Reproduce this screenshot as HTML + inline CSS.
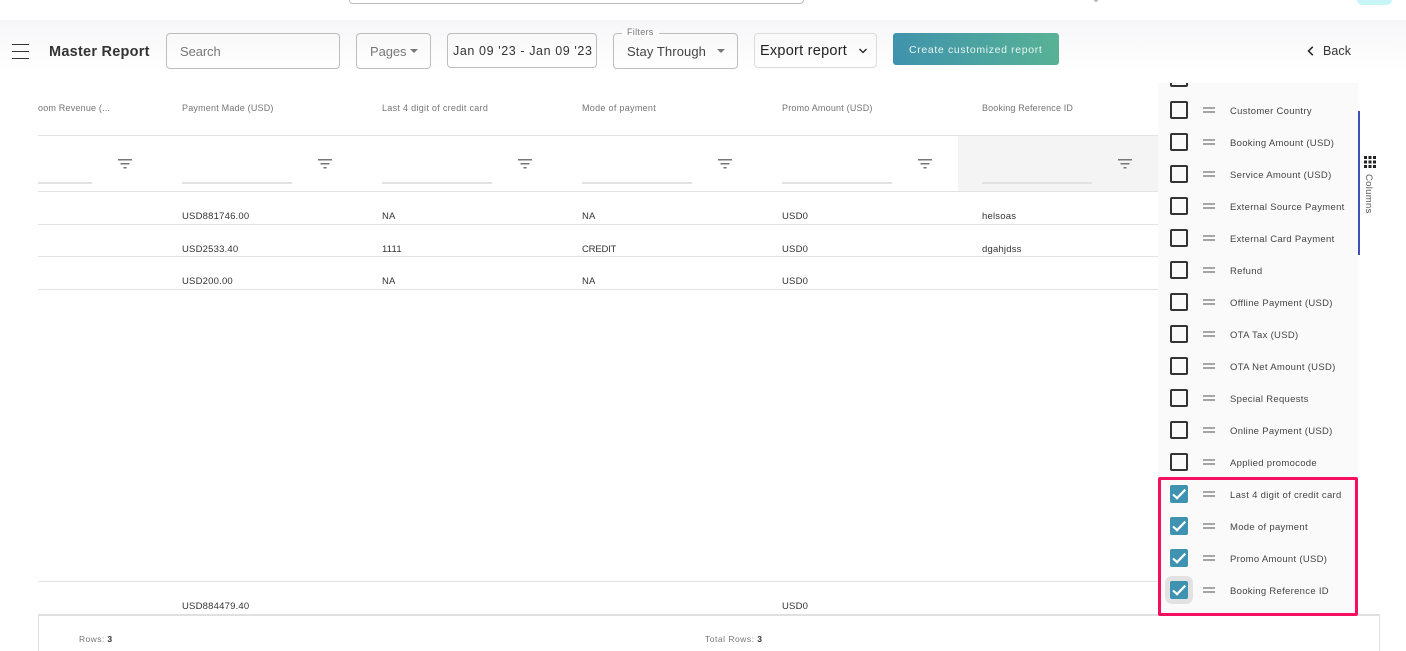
<!DOCTYPE html>
<html>
<head>
<meta charset="utf-8">
<style>
html,body{margin:0;padding:0;background:#fff;width:1406px;height:651px;overflow:hidden;}
body{font-family:"Liberation Sans",sans-serif;}
#p{position:relative;width:1406px;height:651px;overflow:hidden;}
.a{position:absolute;box-sizing:border-box;}
.t{position:absolute;white-space:nowrap;line-height:14px;}
.box{position:absolute;box-sizing:border-box;border:1px solid #bdbdbd;border-radius:4px;background:transparent;}
.h{font-size:9px;color:#757575;top:101px;letter-spacing:.2px;}
.c{font-size:9.5px;color:#333;letter-spacing:.2px;}
.l{position:absolute;left:38px;height:1px;background:#e2e2e2;}
.u{position:absolute;top:182px;height:2px;background:#e2e2e2;}
.f{position:absolute;top:159px;width:14px;height:10px;}
.cb{position:absolute;left:1170px;width:18px;height:18px;box-sizing:border-box;border:2px solid #333;border-radius:2px;background:#fafafa;}
.cb.on{background:#3f93b0;border:0;}
.cb svg{position:absolute;left:0;top:0;}
.d{position:absolute;left:1203px;width:12px;height:6px;box-sizing:border-box;border-top:2px solid #a6a6a6;border-bottom:2px solid #a6a6a6;}
.n{position:absolute;left:1230px;font-size:9.5px;color:#444;white-space:nowrap;line-height:14px;letter-spacing:.3px;}
</style>
</head>
<body>
<div id="p">
<!-- top bar remnants -->
<div class="a" style="left:349px;top:-10px;width:455px;height:14px;border:1px solid #bdbdbd;border-radius:4px;"></div>
<div class="a" style="left:1357px;top:-10px;width:35px;height:15px;background:#c8f5f5;border-radius:5px;"></div>
<div class="a" style="left:1094px;top:0;width:4px;height:2px;background:#bbb;border-radius:0 0 2px 2px;"></div>

<!-- header gradient -->
<div class="a" style="left:0;top:20px;width:1406px;height:52px;background:linear-gradient(#f6f6f8,#fff);"></div>

<!-- hamburger -->
<div class="a" style="left:12px;top:44px;width:17px;height:1.4px;background:#333;"></div>
<div class="a" style="left:12px;top:51px;width:17px;height:1.4px;background:#333;"></div>
<div class="a" style="left:12px;top:58px;width:17px;height:1.4px;background:#333;"></div>

<div class="t" style="left:49px;top:44.500px;font-size:14.500px;font-weight:bold;color:#333;letter-spacing:.25px;">Master Report</div>

<div class="box" style="left:166px;top:33px;width:174px;height:36px;"></div>
<div class="t" style="left:180px;top:45px;font-size:13px;color:#777;letter-spacing:-.1px;">Search</div>

<div class="box" style="left:356px;top:33px;width:75px;height:36px;"></div>
<div class="t" style="left:370px;top:45px;font-size:13px;color:#777;letter-spacing:-.1px;">Pages</div>
<div class="a" style="left:410px;top:49px;border-left:4.500px solid transparent;border-right:4.500px solid transparent;border-top:4.500px solid #777;"></div>

<div class="box" style="left:447px;top:33px;width:150px;height:35px;"></div>
<div class="t" style="left:453px;top:44px;font-size:12.500px;color:#333;letter-spacing:.6px;">Jan 09 '23 - Jan 09 '23</div>

<div class="box" style="left:613px;top:33px;width:125px;height:36px;"></div>
<div class="a" style="left:622px;top:30px;width:37px;height:6px;background:#fbfbfc;"></div>
<div class="t" style="left:627px;top:25px;font-size:9px;color:#777;letter-spacing:.3px;">Filters</div>
<div class="t" style="left:627px;top:45px;font-size:13px;color:#444;letter-spacing:.1px;">Stay Through</div>
<div class="a" style="left:717px;top:49px;border-left:4.500px solid transparent;border-right:4.500px solid transparent;border-top:4.500px solid #777;"></div>

<div class="box" style="left:754px;top:33px;width:123px;height:35px;border-color:#dcdcdc;"></div>
<div class="t" style="left:760px;top:44px;font-size:14.500px;color:#222;letter-spacing:.25px;">Export report</div>
<svg class="a" style="left:858px;top:47px;" width="10" height="8" viewBox="0 0 10 8"><path d="M1.500 2 L5 5.500 L8.500 2" fill="none" stroke="#222" stroke-width="1.300"/></svg>

<div class="a" style="left:893px;top:33px;width:166px;height:32px;border-radius:3px;background:linear-gradient(75deg,#3f92ad,#58b394);"></div>
<div class="t" style="left:909px;top:43px;font-size:10.500px;color:#e8f5f4;letter-spacing:.65px;">Create customized report</div>

<svg class="a" style="left:1306px;top:45px;" width="10" height="12" viewBox="0 0 10 12"><path d="M6.800 1.800 L2.500 6 L6.800 10.200" fill="none" stroke="#222" stroke-width="1.500"/></svg>
<div class="t" style="left:1323px;top:44px;font-size:12.500px;color:#333;letter-spacing:.05px;">Back</div>

<!-- grid -->
<div class="a" style="left:958px;top:136px;width:200px;height:55px;background:#f4f4f4;"></div>
<div class="l" style="top:135px;width:1120px;"></div>
<div class="l" style="top:191px;width:1120px;"></div>
<div class="l" style="top:224px;width:1120px;"></div>
<div class="l" style="top:256px;width:1120px;"></div>
<div class="l" style="top:289px;width:1120px;"></div>
<div class="l" style="top:581px;width:1120px;"></div>

<div class="t h" style="left:38px;">oom Revenue (...</div>
<div class="t h" style="left:182px;">Payment Made (USD)</div>
<div class="t h" style="left:382px;letter-spacing:.3px;">Last 4 digit of credit card</div>
<div class="t h" style="left:582px;letter-spacing:.3px;">Mode of payment</div>
<div class="t h" style="left:782px;">Promo Amount (USD)</div>
<div class="t h" style="left:982px;letter-spacing:.15px;">Booking Reference ID</div>

<div class="u" style="left:38px;width:54px;"></div>
<div class="u" style="left:182px;width:110px;"></div>
<div class="u" style="left:382px;width:110px;"></div>
<div class="u" style="left:582px;width:110px;"></div>
<div class="u" style="left:782px;width:110px;"></div>
<div class="u" style="left:982px;width:110px;"></div>

<svg class="f" style="left:118px;" viewBox="0 0 14 10"><path d="M0 .75H14M2.500 4.750H11.500M5.500 8.750H8.500" stroke="#777" stroke-width="1.400"/></svg>
<svg class="f" style="left:318px;" viewBox="0 0 14 10"><path d="M0 .75H14M2.500 4.750H11.500M5.500 8.750H8.500" stroke="#777" stroke-width="1.400"/></svg>
<svg class="f" style="left:518px;" viewBox="0 0 14 10"><path d="M0 .75H14M2.500 4.750H11.500M5.500 8.750H8.500" stroke="#777" stroke-width="1.400"/></svg>
<svg class="f" style="left:718px;" viewBox="0 0 14 10"><path d="M0 .75H14M2.500 4.750H11.500M5.500 8.750H8.500" stroke="#777" stroke-width="1.400"/></svg>
<svg class="f" style="left:918px;" viewBox="0 0 14 10"><path d="M0 .75H14M2.500 4.750H11.500M5.500 8.750H8.500" stroke="#777" stroke-width="1.400"/></svg>
<svg class="f" style="left:1118px;" viewBox="0 0 14 10"><path d="M0 .75H14M2.500 4.750H11.500M5.500 8.750H8.500" stroke="#777" stroke-width="1.400"/></svg>

<!-- rows -->
<div class="t c" style="left:182px;top:210px;">USD881746.00</div>
<div class="t c" style="left:382px;top:210px;">NA</div>
<div class="t c" style="left:582px;top:210px;">NA</div>
<div class="t c" style="left:782px;top:210px;">USD0</div>
<div class="t c" style="left:982px;top:210px;">helsoas</div>

<div class="t c" style="left:182px;top:243px;">USD2533.40</div>
<div class="t c" style="left:382px;top:243px;">1111</div>
<div class="t c" style="left:582px;top:243px;letter-spacing:-.2px;">CREDIT</div>
<div class="t c" style="left:782px;top:243px;">USD0</div>
<div class="t c" style="left:982px;top:243px;">dgahjdss</div>

<div class="t c" style="left:182px;top:275px;">USD200.00</div>
<div class="t c" style="left:382px;top:275px;">NA</div>
<div class="t c" style="left:582px;top:275px;">NA</div>
<div class="t c" style="left:782px;top:275px;">USD0</div>

<div class="t c" style="left:182px;top:600px;">USD884479.40</div>
<div class="t c" style="left:782px;top:600px;">USD0</div>

<!-- footer -->
<div class="a" style="left:38px;top:614px;width:1342px;height:37px;border:1px solid #e0e0e0;border-top:2px solid #e0e0e0;border-bottom:0;background:#fff;"></div>
<div class="t" style="left:79px;top:632px;font-size:8.500px;color:#777;letter-spacing:.4px;">Rows: <b style="color:#333">3</b></div>
<div class="t" style="left:705px;top:632px;font-size:8.500px;color:#777;letter-spacing:.5px;">Total Rows: <b style="color:#333">3</b></div>

<!-- columns panel -->
<div class="a" style="left:1158px;top:83px;width:200px;height:532px;background:#fafafa;overflow:hidden;">
  <div style="position:absolute;left:12px;top:-14px;width:18px;height:18px;box-sizing:border-box;border:2px solid #333;border-radius:2px;"></div>
</div>
<div class="a" style="left:1358px;top:111px;width:2px;height:144px;background:#3f51b5;"></div>

<svg class="a" style="left:1364px;top:156px;" width="12" height="12" viewBox="0 0 12 12"><path fill="#222" d="M0 0h3v3H0zM4.500 0h3v3h-3zM9 0h3v3H9zM0 4.500h3v3H0zM4.500 4.500h3v3h-3zM9 4.500h3v3H9zM0 9h3v3H0zM4.500 9h3v3h-3zM9 9h3v3H9z"/></svg>
<div class="t" style="left:1368px;top:174px;font-size:9.500px;color:#555;letter-spacing:.3px;transform-origin:0 0;transform:rotate(90deg) translate(0,-7px);">Columns</div>

<div class="cb" style="top:101px;"></div><div class="d" style="top:107px;"></div><div class="n" style="top:105px;">Customer Country</div>
<div class="cb" style="top:133px;"></div><div class="d" style="top:139px;"></div><div class="n" style="top:137px;">Booking Amount (USD)</div>
<div class="cb" style="top:165px;"></div><div class="d" style="top:171px;"></div><div class="n" style="top:169px;">Service Amount (USD)</div>
<div class="cb" style="top:197px;"></div><div class="d" style="top:203px;"></div><div class="n" style="top:201px;">External Source Payment</div>
<div class="cb" style="top:229px;"></div><div class="d" style="top:235px;"></div><div class="n" style="top:233px;">External Card Payment</div>
<div class="cb" style="top:261px;"></div><div class="d" style="top:267px;"></div><div class="n" style="top:265px;">Refund</div>
<div class="cb" style="top:293px;"></div><div class="d" style="top:299px;"></div><div class="n" style="top:297px;">Offline Payment (USD)</div>
<div class="cb" style="top:325px;"></div><div class="d" style="top:331px;"></div><div class="n" style="top:329px;">OTA Tax (USD)</div>
<div class="cb" style="top:357px;"></div><div class="d" style="top:363px;"></div><div class="n" style="top:361px;">OTA Net Amount (USD)</div>
<div class="cb" style="top:389px;"></div><div class="d" style="top:395px;"></div><div class="n" style="top:393px;">Special Requests</div>
<div class="cb" style="top:421px;"></div><div class="d" style="top:427px;"></div><div class="n" style="top:425px;">Online Payment (USD)</div>
<div class="cb" style="top:453px;"></div><div class="d" style="top:459px;"></div><div class="n" style="top:457px;">Applied promocode</div>

<div class="a" style="left:1165px;top:576px;width:28px;height:28px;background:#e2e2e2;border-radius:7px;"></div>

<div class="cb on" style="top:485px;"><svg width="18" height="18" viewBox="0 0 18 18"><path d="M3 9.500L7 13.200L15.300 4.600" fill="none" stroke="#fff" stroke-width="2.200"/></svg></div><div class="d" style="top:491px;"></div><div class="n" style="top:489px;">Last 4 digit of credit card</div>
<div class="cb on" style="top:517px;"><svg width="18" height="18" viewBox="0 0 18 18"><path d="M3 9.500L7 13.200L15.300 4.600" fill="none" stroke="#fff" stroke-width="2.200"/></svg></div><div class="d" style="top:523px;"></div><div class="n" style="top:521px;">Mode of payment</div>
<div class="cb on" style="top:549px;"><svg width="18" height="18" viewBox="0 0 18 18"><path d="M3 9.500L7 13.200L15.300 4.600" fill="none" stroke="#fff" stroke-width="2.200"/></svg></div><div class="d" style="top:555px;"></div><div class="n" style="top:553px;">Promo Amount (USD)</div>
<div class="cb on" style="top:581px;"><svg width="18" height="18" viewBox="0 0 18 18"><path d="M3 9.500L7 13.200L15.300 4.600" fill="none" stroke="#fff" stroke-width="2.200"/></svg></div><div class="d" style="top:587px;"></div><div class="n" style="top:585px;">Booking Reference ID</div>

<!-- pink highlight -->
<div class="a" style="left:1158px;top:477px;width:200px;height:139px;border:3px solid #f50f5f;border-radius:2px;"></div>
</div>
</body>
</html>
